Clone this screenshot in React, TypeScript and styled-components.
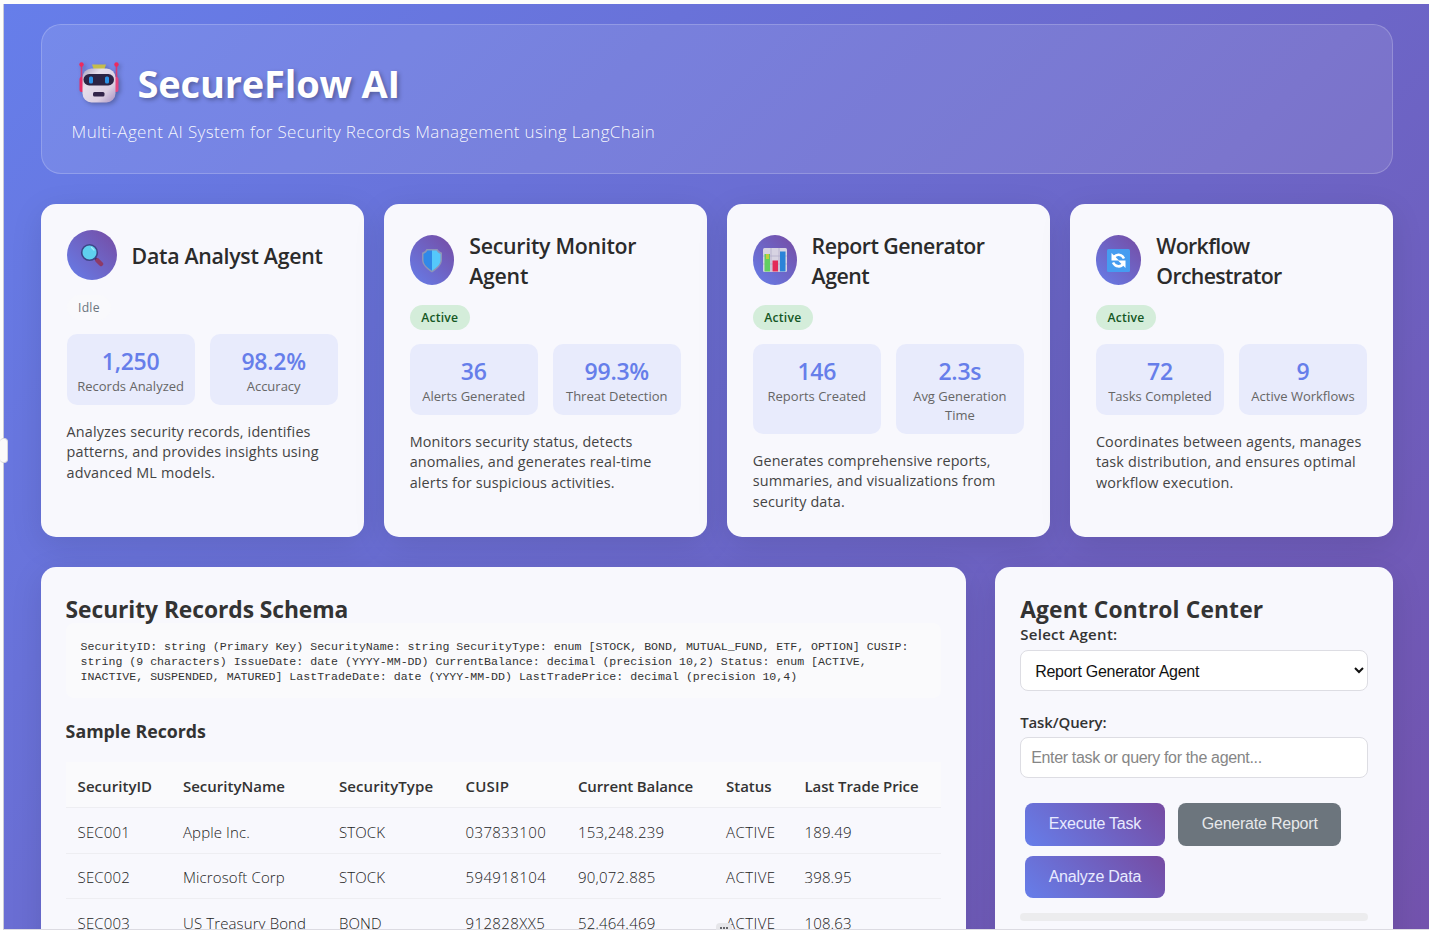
import React from 'react';
import styled, { createGlobalStyle, css } from 'styled-components';

const sans = '"Open Sans", "Noto Sans", sans-serif';
const arial = '"Liberation Sans", Arial, sans-serif';
const brand = 'linear-gradient(45deg, #667eea 0%, #764ba2 100%)';

const GlobalStyle = createGlobalStyle`
  *, *::before, *::after { box-sizing: border-box; margin: 0; padding: 0; }
  html, body { height: 100%; overflow: hidden; background: #fff; }
  body { font-family: ${sans}; color: #333; }
`;

const Window = styled.div`
  position: relative;
  height: 930px;
  padding: 4px 0 0 3px;
  overflow: hidden;
  background: #fdfdfb;
`;

const Viewport = styled.div`
  height: 926px;
  overflow: hidden;
  border-left: 1px solid #c9cbd8;
  border-bottom: 1px solid #dcdbe2;
`;

const Page = styled.div`
  height: 1320px;
  padding: 20px 36px 20px 36.6px;
  background: linear-gradient(135deg, #667eea 0%, #6c66c8 50%, #764ba2 100%);
`;

const Hero = styled.header`
  height: 150px;
  padding: 30px;
  margin-bottom: 30px;
  border: 1px solid rgba(255, 255, 255, 0.2);
  border-radius: 20px;
  background: rgba(255, 255, 255, 0.1);
`;

const HeroTitle = styled.h1`
  display: flex;
  align-items: center;
  height: 53px;
  padding: 3px 0 0 6px;
  gap: 16px;
  color: #fff;
  font-size: 38px;
  font-weight: 700;
  line-height: 53px;
  letter-spacing: -0.19px;
  text-shadow: 2px 2px 4px rgba(0, 0, 0, 0.3);

  svg { filter: drop-shadow(2px 2px 2px rgba(0, 0, 0, 0.25)); }
`;

const HeroText = styled.p`
  margin-top: 12px;
  color: rgba(255, 255, 255, 0.95);
  font-size: 17px;
  font-weight: 300;
  line-height: 24px;
  letter-spacing: 0.36px;
`;

const panel = css`
  border-radius: 15px;
  background: #f8f8fd;
  box-shadow: 0 8px 32px rgba(0, 0, 0, 0.1);
`;

const Agents = styled.section`
  display: grid;
  grid-template-columns: repeat(4, 1fr);
  gap: 20px;
  margin-bottom: 30px;
`;

const AgentCard = styled.article`
  ${panel}
  height: 333px;
  padding: 26px;
`;

const AgentHead = styled.div`
  display: flex;
  align-items: center;
  gap: 15px;
  margin-bottom: 14.5px;
`;

const AgentIcon = styled.div<{ $width: number }>`
  display: flex;
  align-items: center;
  justify-content: center;
  flex: none;
  width: ${p => p.$width}px;
  height: 50px;
  border-radius: 50%;
  background: ${brand};
`;

const AgentName = styled.h3<{ $spacing: number }>`
  padding-top: 1px;
  margin-bottom: -1px;
  color: #2b2b2b;
  font-size: 21.3px;
  font-weight: 600;
  line-height: 30px;
  letter-spacing: ${p => p.$spacing}px;
`;

const Badge = styled.span<{ $active: boolean }>`
  display: block;
  width: fit-content;
  height: 25px;
  padding: 0 11.5px;
  margin-bottom: 14.5px;
  border-radius: 20px;
  background: ${p => (p.$active ? '#d4edda' : '#f9f9fc')};
  color: ${p => (p.$active ? '#155724' : '#6c757d')};
  font-size: 12.2px;
  font-weight: ${p => (p.$active ? 600 : 400)};
  line-height: 25px;
  letter-spacing: 0.2px;
`;

const Stats = styled.div`
  display: grid;
  grid-template-columns: 1fr 1fr;
  gap: 15px;
  margin-bottom: 16.5px;
`;

const Stat = styled.div`
  min-height: 71px;
  padding: 11px 10px 9px;
  border-radius: 10px;
  background: #e8ebfc;
  text-align: center;
`;

const StatValue = styled.div`
  color: #667eea;
  font-size: 23px;
  font-weight: 600;
  line-height: 32px;
  letter-spacing: -0.25px;
`;

const StatLabel = styled.div`
  margin: 0 -4px;
  color: #666;
  font-size: 13px;
  line-height: 19px;
`;

const AgentText = styled.p`
  margin-right: -6px;
  color: #444;
  font-size: 14.4px;
  line-height: 20.9px;
  letter-spacing: 0.15px;
  white-space: pre-line;
`;

const Main = styled.main`
  display: grid;
  grid-template-columns: 925px 1fr;
  gap: 29.6px;
`;

const Panel = styled.section`
  ${panel}
  height: 600px;
  padding: 25px;
`;

const PanelTitle = styled.h2<{ $spacing: number }>`
  height: 31px;
  padding-top: 2px;
  font-size: 22.8px;
  font-weight: 700;
  line-height: 32px;
  letter-spacing: ${p => p.$spacing}px;
`;

const Schema = styled.div`
  height: 75px;
  padding: 16px 15px 14px;
  margin-bottom: 20px;
  border-radius: 8px;
  background: #fafafc;
  font-family: "Liberation Mono", monospace;
  font-size: 11.6px;
  line-height: 15px;
  color: #333;
  white-space: pre;
`;

const SubTitle = styled.h3`
  height: 44px;
  font-size: 17.8px;
  font-weight: 700;
  line-height: 26px;
`;

const Table = styled.table`
  width: 875px;
  table-layout: fixed;
  border-collapse: collapse;
  text-align: left;
`;

const Row = styled.tr`
  height: 45.67px;
  border-bottom: 1px solid #eeeef2;
`;

const HeadCell = styled.th<{ $width: number; $spacing: number }>`
  width: ${p => p.$width}px;
  padding: 3px 0 0 12px;
  background: #fafafc;
  font-size: 15px;
  font-weight: 600;
  letter-spacing: ${p => p.$spacing}px;
  white-space: nowrap;
`;

const Cell = styled.td<{ $spacing: number }>`
  padding: 2.500px 0 0 12px;
  color: #222;
  font-size: 15px;
  font-weight: 300;
  letter-spacing: ${p => p.$spacing}px;
  white-space: nowrap;
`;

const Label = styled.label<{ $spacing: number }>`
  display: block;
  height: 27px;
  padding-top: 1px;
  font-size: 15px;
  font-weight: 600;
  line-height: 21px;
  letter-spacing: ${p => p.$spacing}px;
`;

const field = css`
  display: block;
  width: 100%;
  border: 1px solid #dddde3;
  border-radius: 8px;
  background-color: #fff;
  font-family: ${arial};
  font-size: 16px;
`;

const Select = styled.select`
  ${field}
  height: 41px;
  padding: 11px 0 10px 10px;
  margin-bottom: 20px;
  color: #111;
  letter-spacing: -0.27px;
`;

const Input = styled.input`
  ${field}
  height: 41px;
  padding: 10px;
  margin: -1px 0 20px;
  letter-spacing: -0.34px;
  &::placeholder { color: #868686; }
`;

const Actions = styled.div`
  display: flex;
  flex-wrap: wrap;
  padding: 5px 0 0 5px;
  gap: 10px 13.500px;
  margin-bottom: 15px;
`;

const Button = styled.button<{ $muted?: boolean; $width: number }>`
  width: ${p => p.$width}px;
  height: 42.5px;
  border: 0;
  border-radius: 8px;
  background: ${p => (p.$muted ? '#6c757d' : brand)};
  color: ${p => (p.$muted ? '#e6e8ea' : '#e8eaff')};
  font-family: ${arial};
  font-size: 16px;
  letter-spacing: -0.22px;
`;

const Progress = styled.div`
  height: 8px;
  border-radius: 4px;
  background: #ececee;
`;

const SideHandle = styled.div`
  position: absolute;
  left: 0;
  top: 438px;
  width: 8px;
  height: 25px;
  border: 1px solid #d5d5dc;
  border-left: 0;
  border-radius: 4px;
  background: #fbfbfa;
`;

const BottomHandle = styled.div`
  position: absolute;
  left: 716px;
  top: 923px;
  display: flex;
  align-items: center;
  justify-content: center;
  gap: 1px;
  width: 16px;
  height: 7px;
  padding-top: 2px;
  border-radius: 4px 4px 0 0;
  background: #e6e6ea;
`;

const Dot = styled.i`
  width: 2px;
  height: 2px;
  background: #66666c;
`;

const Robot = () => (
  <svg width="44" height="44" viewBox="0 0 44 44">
    <defs>
      <linearGradient id="shell" x1="0" y1="0" x2="1" y2="1">
        <stop offset="0" stopColor="#a99fbc" />
        <stop offset="0.3" stopColor="#e6dfeb" />
        <stop offset="0.7" stopColor="#dccfe2" />
        <stop offset="1" stopColor="#a88fc0" />
      </linearGradient>
    </defs>
    <path d="M3.500 4v26M38.500 4v26" stroke="#d23a78" strokeWidth="1.600" />
    <circle cx="3.500" cy="3.500" r="2.200" fill="#ee2a5e" />
    <circle cx="38.500" cy="3.500" r="2.200" fill="#ee2a5e" />
    <rect x="1.500" y="16" width="5" height="15" rx="2" fill="#e72c68" />
    <rect x="35.500" y="16" width="5" height="15" rx="2" fill="#e4477f" />
    <path d="M14 3.500h14l-2 6H16z" fill="#c5bd4c" />
    <rect x="4.500" y="7.500" width="33" height="34" rx="9" fill="url(#shell)" />
    <rect x="5.500" y="13" width="30.500" height="11.500" rx="5.700" fill="#2c2444" />
    <rect x="11" y="15.500" width="4" height="7" rx="1.500" fill="#2b93e6" />
    <rect x="27" y="15.500" width="4" height="7" rx="1.500" fill="#2b93e6" />
    <rect x="15" y="31" width="11.500" height="4.500" rx="1.500" fill="#33254a" />
  </svg>
);

const Magnifier = () => (
  <svg width="24" height="24" viewBox="0 0 24 24">
    <path d="M15 15l2.500 2.500" stroke="#3e2b60" strokeWidth="2.500" />
    <path d="M17.500 17.500l3.500 3.500" stroke="#8e3a67" strokeWidth="4.500" strokeLinecap="round" />
    <circle cx="9.500" cy="9.500" r="7.800" fill="#5fd0ef" stroke="#3d4487" strokeWidth="1.600" />
    <path d="M11.500 4.500l2.500 2.500" stroke="#a7ecfb" strokeWidth="1.300" strokeLinecap="round" />
  </svg>
);

const Shield = () => (
  <svg width="22" height="25" viewBox="0 0 22 25">
    <path d="M5.500 1h11l1.500 2 3 1.800v7c0 5-4.500 9.500-10 12.700C5.500 21.300 1 16.800 1 11.800v-7L4 3z" fill="#8c94b8" />
    <path d="M11 2.500H6.500L5 4.500 2.500 6v6c0 4 3.600 7.800 8.500 10.700z" fill="#3089e8" />
    <path d="M11 2.500h4.500L17 4.500 19.500 6v6c0 4-3.600 7.800-8.500 10.700z" fill="#55c8fb" />
  </svg>
);

const BarChart = () => (
  <svg width="24" height="24" viewBox="0 0 24 24">
    <rect width="24" height="24" rx="1.500" fill="#d7d3e2" />
    <path d="M0 8h24M0 16h24M8 0v24M16 0v24" stroke="#b3aecb" strokeWidth="0.800" />
    <rect x="1.500" y="6" width="5.500" height="17.500" fill="#62cf62" />
    <rect x="3" y="6" width="3" height="5" fill="#c3cd3b" />
    <rect x="9.500" y="12.500" width="5.500" height="11" fill="#e32c59" />
    <rect x="17" y="3.500" width="5.500" height="20" fill="#2b83d8" />
  </svg>
);

const Cycle = () => (
  <svg width="23" height="23" viewBox="0 0 23 23">
    <rect width="23" height="23" rx="1.500" fill="#469cf0" />
    <path d="M7 8.200C9 5 14.500 4.500 17 9.500" fill="none" stroke="#fff" strokeWidth="2.600" />
    <path d="M4.500 4v7.500H12z" fill="#fff" />
    <path d="M16 15C14 18.200 8.500 18.500 6 13.500" fill="none" stroke="#fff" strokeWidth="2.600" />
    <path d="M18.500 19v-7.500H11z" fill="#fff" />
  </svg>
);

const agents = [
  {
    name: ['Data Analyst Agent'], spacing: -0.28, icon: <Magnifier />, iconWidth: 50, active: false,
    stats: [['1,250', 'Records Analyzed'], ['98.2%', 'Accuracy']],
    text: 'Analyzes security records, identifies\npatterns, and provides insights using\nadvanced ML models.',
  },
  {
    name: ['Security Monitor', 'Agent'], spacing: -0.27, icon: <Shield />, iconWidth: 44.6, active: true,
    stats: [['36', 'Alerts Generated'], ['99.3%', 'Threat Detection']],
    text: 'Monitors security status, detects\nanomalies, and generates real-time\nalerts for suspicious activities.',
  },
  {
    name: ['Report Generator', 'Agent'], spacing: -0.5, icon: <BarChart />, iconWidth: 43.8, active: true,
    stats: [['146', 'Reports Created'], ['2.3s', 'Avg Generation Time']],
    text: 'Generates comprehensive reports,\nsummaries, and visualizations from\nsecurity data.',
  },
  {
    name: ['Workflow', 'Orchestrator'], spacing: -0.66, icon: <Cycle />, iconWidth: 45.4, active: true,
    stats: [['72', 'Tasks Completed'], ['9', 'Active Workflows']],
    text: 'Coordinates between agents, manages\ntask distribution, and ensures optimal\nworkflow execution.',
  },
];

const columns = [
  { title: 'SecurityID', width: 105.4, head: 0.05, cell: 0.15 },
  { title: 'SecurityName', width: 156, head: 0, cell: 0.12 },
  { title: 'SecurityType', width: 126.5, head: 0.1, cell: 0.1 },
  { title: 'CUSIP', width: 112.5, head: 0.2, cell: 0.4 },
  { title: 'Current Balance', width: 148, head: -0.14, cell: 0.22 },
  { title: 'Status', width: 78.5, head: 0, cell: 0.45 },
  { title: 'Last Trade Price', width: 148.1, head: -0.09, cell: 0.15 },
];

const records = [
  ['SEC001', 'Apple Inc.', 'STOCK', '037833100', '153,248.239', 'ACTIVE', '189.49'],
  ['SEC002', 'Microsoft Corp', 'STOCK', '594918104', '90,072.885', 'ACTIVE', '398.95'],
  ['SEC003', 'US Treasury Bond', 'BOND', '912828XX5', '52,464.469', 'ACTIVE', '108.63'],
];

const schema = [
  'SecurityID: string (Primary Key) SecurityName: string SecurityType: enum [STOCK, BOND, MUTUAL_FUND, ETF, OPTION] CUSIP:',
  'string (9 characters) IssueDate: date (YYYY-MM-DD) CurrentBalance: decimal (precision 10,2) Status: enum [ACTIVE,',
  'INACTIVE, SUSPENDED, MATURED] LastTradeDate: date (YYYY-MM-DD) LastTradePrice: decimal (precision 10,4)',
].join('\n');

export default function App() {
  return (
    <>
      <GlobalStyle />
      <Window>
        <Viewport>
          <Page>
            <Hero>
              <HeroTitle><Robot />SecureFlow AI</HeroTitle>
              <HeroText>Multi-Agent AI System for Security Records Management using LangChain</HeroText>
            </Hero>
            <Agents>
              {agents.map(a => (
                <AgentCard key={a.name[0]}>
                  <AgentHead>
                    <AgentIcon $width={a.iconWidth}>{a.icon}</AgentIcon>
                    <AgentName $spacing={a.spacing}>
                      {a.name.map((line, i) => <React.Fragment key={line}>{i > 0 && <br />}{line}</React.Fragment>)}
                    </AgentName>
                  </AgentHead>
                  <Badge $active={a.active}>{a.active ? 'Active' : 'Idle'}</Badge>
                  <Stats>
                    {a.stats.map(([value, label]) => (
                      <Stat key={label}>
                        <StatValue>{value}</StatValue>
                        <StatLabel>{label}</StatLabel>
                      </Stat>
                    ))}
                  </Stats>
                  <AgentText>{a.text}</AgentText>
                </AgentCard>
              ))}
            </Agents>
            <Main>
              <Panel>
                <PanelTitle $spacing={-0.06}>Security Records Schema</PanelTitle>
                <Schema>{schema}</Schema>
                <SubTitle>Sample Records</SubTitle>
                <Table>
                  <thead>
                    <Row>
                      {columns.map(c => <HeadCell key={c.title} $width={c.width} $spacing={c.head}>{c.title}</HeadCell>)}
                    </Row>
                  </thead>
                  <tbody>
                    {records.map(r => (
                      <Row key={r[0]}>
                        {r.map((v, i) => <Cell key={i} $spacing={columns[i].cell}>{v}</Cell>)}
                      </Row>
                    ))}
                  </tbody>
                </Table>
              </Panel>
              <Panel>
                <PanelTitle $spacing={0.13}>Agent Control Center</PanelTitle>
                <Label $spacing={0.3}>Select Agent:</Label>
                <Select defaultValue="report">
                  <option value="report">Report Generator Agent</option>
                </Select>
                <Label $spacing={-0.12}>Task/Query:</Label>
                <Input placeholder="Enter task or query for the agent..." />
                <Actions>
                  <Button $width={139.5}>Execute Task</Button>
                  <Button $width={163} $muted>Generate Report</Button>
                  <Button $width={139.5}>Analyze Data</Button>
                </Actions>
                <Progress />
              </Panel>
            </Main>
          </Page>
        </Viewport>
        <SideHandle />
        <BottomHandle><Dot /><Dot /><Dot /></BottomHandle>
      </Window>
    </>
  );
}
